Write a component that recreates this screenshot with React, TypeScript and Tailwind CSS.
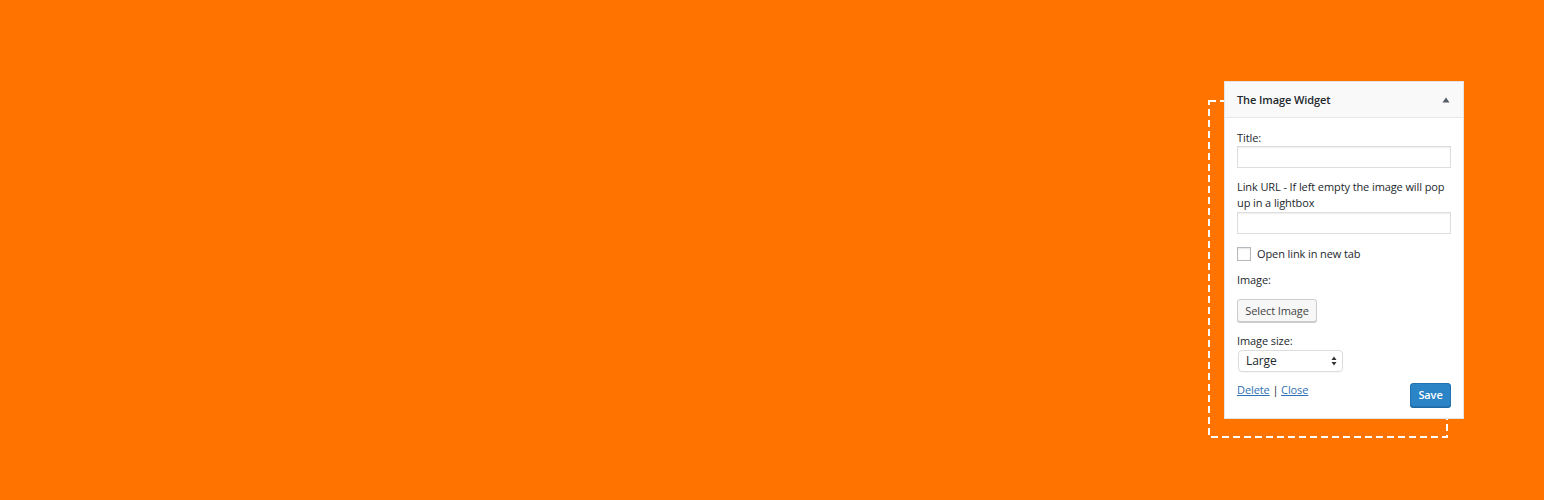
export default function App() {
  return (
    <div
      className="h-[500px] w-full bg-[#ff7400] flex justify-end pt-[81px] pr-[80px]"
      style={{ fontFamily: '"Open Sans", "Noto Sans", sans-serif' }}
    >
      <div className="relative w-[240px] h-[338px]">
        {/* dashed frame behind the widget */}
        <svg
          className="absolute left-[-16px] top-[19px]"
          width="240"
          height="338"
          viewBox="0 0 240 338"
        >
          <rect
            x="1"
            y="1"
            width="238"
            height="336"
            fill="none"
            stroke="#ffffff"
            strokeWidth="2"
            strokeDasharray="7 4"
          />
        </svg>

        <div className="relative h-full bg-white border border-[#e5e5e5] text-[11px] tracking-[-0.1px] leading-[16px] text-[#23282d]">
          {/* header */}
          <div className="h-[36px] flex items-center justify-between px-[12px] bg-[#f9f9f9] border-b border-[#e8e8e8]">
            <span className="font-semibold text-[11px]">The Image Widget</span>
            <svg width="8" height="6" viewBox="0 0 8 6" className="mr-[1px]">
              <path d="M4 0.5 L7.5 5.5 L0.5 5.5 Z" fill="#555d66" />
            </svg>
          </div>

          {/* body */}
          <div className="px-[12px] pt-[12px]">
            <div>Title:</div>
            <div className="h-[22px] border border-[#ddd] shadow-[inset_0_1px_2px_rgba(0,0,0,0.07)]" />

            <div className="mt-[11px]">
              Link URL - If left empty the image will pop up in a lightbox
            </div>
            <div className="mt-[1px] h-[22px] border border-[#ddd] shadow-[inset_0_1px_2px_rgba(0,0,0,0.07)]" />

            <div className="mt-[12px] flex items-center gap-[6px]">
              <div className="w-[14px] h-[14px] border border-[#b4b9be] shadow-[inset_0_1px_2px_rgba(0,0,0,0.1)]" />
              <span>Open link in new tab</span>
            </div>

            <div className="mt-[10px]">Image:</div>
            <button className="block mt-[11px] h-[23px] w-[80px] border border-[#ccc] bg-[#f7f7f7] rounded-[3px] text-[11px] text-[#444] shadow-[0_1px_0_#ccc] leading-[20px]">
              Select Image
            </button>

            <div className="mt-[11px]">Image size:</div>
            <div className="mt-[1px] ml-[1px] h-[22px] w-[105px] border border-[#ddd] rounded-[4px] flex items-center justify-between pl-[7px] pr-[5px] text-[12px] shadow-[0_1px_1px_rgba(0,0,0,0.04)]">
              <span>Large</span>
              <svg width="6" height="10" viewBox="0 0 6 10">
                <path d="M3 0.5 L5.5 4 L0.5 4 Z" fill="#333" />
                <path d="M3 9.5 L5.5 6 L0.5 6 Z" fill="#333" />
              </svg>
            </div>

            <div className="mt-[10px] flex justify-between items-start">
              <div className="text-[#2f6fb4]">
                <span className="underline">Delete</span>
                <span className="text-[#23282d]"> | </span>
                <span className="underline">Close</span>
              </div>
              <button className="mt-[1px] h-[24px] w-[41px] rounded-[3px] bg-[#2a84c6] border border-[#2271b1] text-white text-[11px] font-semibold shadow-[0_1px_0_#1f6aa5]">
                Save
              </button>
            </div>
          </div>
        </div>
      </div>
    </div>
  );
}
